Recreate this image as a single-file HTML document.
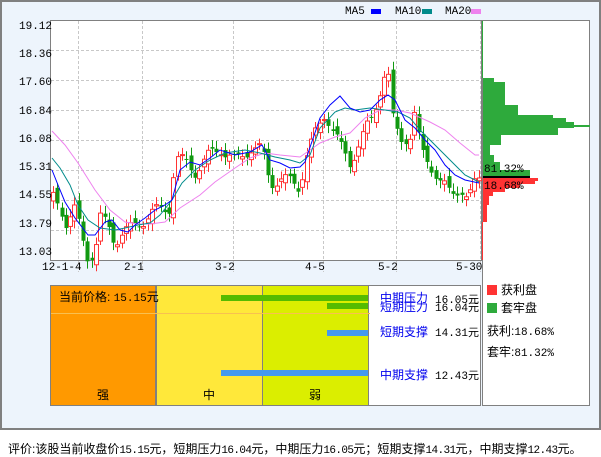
<!DOCTYPE html>
<html><head><meta charset="utf-8"><style>
*{margin:0;padding:0}
body{width:601px;height:456px;background:#fff;position:relative;overflow:hidden;font-family:"Liberation Mono","Noto Sans CJK SC",monospace}
.t{position:absolute;font-size:11px;color:#000;white-space:nowrap;line-height:12px}
.c{font-family:"Liberation Sans","Noto Sans CJK SC",sans-serif;font-size:12px}
.f span{font-family:'Liberation Mono';font-size:11px;letter-spacing:-0.6px}
</style></head><body>
<div style="position:absolute;left:0;top:0;width:597px;height:426px;border:2px solid #808080;border-right-width:3px;background:#edf4fc"></div>
<svg style="position:absolute;left:0;top:0" width="601" height="456">
<rect x="50.5" y="20.5" width="431" height="240" fill="#fff" stroke="#808080"/>
<rect x="482.5" y="20.5" width="107" height="385" fill="#fff" stroke="#808080"/>
<g stroke="#c8c8c8" stroke-dasharray="3,2">
<line x1="51" y1="50.5" x2="481" y2="50.5"/><line x1="51" y1="80.5" x2="481" y2="80.5"/><line x1="51" y1="110.5" x2="481" y2="110.5"/><line x1="51" y1="140.5" x2="481" y2="140.5"/><line x1="51" y1="170.5" x2="481" y2="170.5"/><line x1="51" y1="200.5" x2="481" y2="200.5"/><line x1="51" y1="230.5" x2="481" y2="230.5"/>
<line x1="78.5" y1="21" y2="272" x2="78.5"/><line x1="142.5" y1="21" y2="272" x2="142.5"/><line x1="233.5" y1="21" y2="272" x2="233.5"/><line x1="323.5" y1="21" y2="272" x2="323.5"/><line x1="396.5" y1="21" y2="272" x2="396.5"/><line x1="480.5" y1="21" y2="272" x2="480.5"/>
</g>
<g id="cd"></g>
<polyline fill="none" stroke="#ee82ee" points="52,131 65,145 78,163 95,190 110,210 125,222 138,224 150,224 165,222 180,208 200,195 215,182 235,168 250,158 265,153 280,155 300,157 310,150 320,143 335,137 350,133 365,118 380,110 395,110 410,113 430,122 445,130 460,143 475,155 479,155"/>
<polyline fill="none" stroke="#008b8b" points="52,158 60,168 70,185 78,205 88,220 100,228 115,230 125,228 138,225 150,223 160,215 172,200 182,183 195,170 210,160 225,153 245,150 260,153 275,157 290,160 300,163 310,155 320,128 335,112 345,108 355,110 370,108 385,110 398,112 410,118 420,130 430,140 440,150 455,165 465,175 475,180 479,182"/>
<polyline fill="none" stroke="#0000ff" points="52,170 58,185 65,202 75,218 88,235 95,235 105,222 112,220 120,230 128,232 135,225 145,218 155,210 165,205 172,200 180,170 190,162 200,165 210,158 220,150 235,155 250,152 262,145 270,160 280,163 290,168 300,167 305,162 320,118 330,105 340,96 350,108 360,112 370,110 380,100 388,95 395,100 405,120 415,128 425,140 435,150 445,165 455,175 465,180 479,183"/>
<line x1="482.5" y1="21" x2="482.5" y2="78" stroke="#2eaa3c"/>
<g fill="#2eaa3c">
<rect x="483" y="78" width="11" height="4"/><rect x="483" y="82" width="22" height="23"/><rect x="483" y="105" width="35" height="10"/><rect x="483" y="115" width="70" height="3"/><rect x="483" y="118" width="83" height="4"/><rect x="483" y="122" width="91" height="6"/><rect x="483" y="125" width="107" height="2"/><rect x="483" y="128" width="75" height="7"/><rect x="483" y="135" width="18" height="10"/><rect x="483" y="145" width="7" height="10"/><rect x="483" y="155" width="11" height="7"/><rect x="483" y="162" width="17" height="8"/><rect x="483" y="170" width="47" height="6"/>
</g>
<rect x="483" y="176" width="47" height="2" fill="#000"/>
<g fill="#ff3333">
<rect x="483" y="178" width="55" height="3"/><rect x="483" y="181" width="52" height="3"/><rect x="483" y="184" width="37" height="4"/><rect x="483" y="188" width="22" height="4"/><rect x="483" y="192" width="10" height="4"/><rect x="483" y="196" width="6" height="9"/><rect x="483" y="205" width="4" height="17"/><rect x="482" y="222" width="1" height="38"/>
</g>
<rect x="371" y="9" width="10" height="5" fill="#0000ff"/><rect x="422" y="9" width="10" height="5" fill="#008b8b"/><rect x="471" y="9" width="10" height="5" fill="#ee82ee"/>
<rect x="50.5" y="285.5" width="105" height="120" fill="#ff9900" stroke="#808080"/>
<rect x="156.5" y="285.5" width="106" height="120" fill="#ffe83a" stroke="#808080"/>
<rect x="262.5" y="285.5" width="106" height="120" fill="#dbee00" stroke="#808080"/>
<rect x="368.5" y="285.5" width="112" height="120" fill="#fff" stroke="#808080"/>
<line x1="51" y1="313.5" x2="370" y2="313.5" stroke="#f8c050"/>
<rect x="221" y="295" width="147" height="6" fill="#55bb00"/>
<rect x="327" y="303" width="41" height="6" fill="#55bb00"/>
<rect x="327" y="330" width="41" height="6" fill="#4499ee"/>
<rect x="221" y="370" width="147" height="6" fill="#4499ee"/>
<rect x="487" y="285" width="10" height="10" fill="#ff3333"/>
<rect x="487" y="303" width="10" height="10" fill="#2eaa3c"/>
</svg>
<div class="t" style="left:19px;top:21px">19.12</div>
<div class="t" style="left:19px;top:49px">18.36</div>
<div class="t" style="left:19px;top:77px">17.60</div>
<div class="t" style="left:19px;top:106px">16.84</div>
<div class="t" style="left:19px;top:134px">16.08</div>
<div class="t" style="left:19px;top:162px">15.31</div>
<div class="t" style="left:19px;top:190px">14.55</div>
<div class="t" style="left:19px;top:219px">13.79</div>
<div class="t" style="left:19px;top:247px">13.03</div>
<div class="t" style="left:42px;top:262px">12-1-4</div>
<div class="t" style="left:124px;top:262px">2-1</div>
<div class="t" style="left:215px;top:262px">3-2</div>
<div class="t" style="left:305px;top:262px">4-5</div>
<div class="t" style="left:378px;top:262px">5-2</div>
<div class="t" style="left:456px;top:262px">5-30</div>
<div class="t" style="left:345px;top:6px">MA5</div>
<div class="t" style="left:395px;top:6px">MA10</div>
<div class="t" style="left:445px;top:6px">MA20</div>
<div class="t" style="left:484px;top:164px">81.32%</div>
<div class="t" style="left:484px;top:181px">18.68%</div>
<div class="t c" style="left:59px;top:291px">当前价格: <span style="font-family:'Liberation Mono';font-size:11px">15.15</span>元</div>
<div class="t c" style="left:380px;top:292px;color:#0000ee">中期压力</div>
<div class="t c" style="left:380px;top:301px;color:#0000ee">短期压力</div>
<div class="t" style="left:435px;top:295px">16.05元</div>
<div class="t" style="left:435px;top:303px">16.04元</div>
<div class="t c" style="left:380px;top:326px;color:#0000ee">短期支撑</div>
<div class="t" style="left:435px;top:328px">14.31元</div>
<div class="t c" style="left:380px;top:369px;color:#0000ee">中期支撑</div>
<div class="t" style="left:435px;top:371px">12.43元</div>
<div class="t c" style="left:97px;top:389px">强</div>
<div class="t c" style="left:203px;top:389px">中</div>
<div class="t c" style="left:309px;top:389px">弱</div>
<div class="t c" style="left:501px;top:284px">获利盘</div>
<div class="t c" style="left:501px;top:302px">套牢盘</div>
<div class="t c" style="left:487px;top:325px">获利:<span style="font-family:'Liberation Mono';font-size:11px">18.68%</span></div>
<div class="t c" style="left:487px;top:346px">套牢:<span style="font-family:'Liberation Mono';font-size:11px">81.32%</span></div>
<div class="t c f" style="left:8px;top:443px;font-size:12px">评价:该股当前收盘价<span>15.15</span>元，短期压力<span>16.04</span>元，中期压力<span>16.05</span>元；短期支撑<span>14.31</span>元，中期支撑<span>12.43</span>元。</div>
<script>
var k=[[53,14.6],[60,14.4],[66,14.0],[75,14.3],[82,13.6],[88,13.1],[95,13.3],[100,14.1],[110,13.8],[115,13.5],[120,13.7],[130,13.8],[140,14.0],[150,14.2],[160,14.3],[170,14.4],[175,15.6],[185,15.5],[195,15.3],[210,15.7],[220,15.9],[235,15.5],[250,15.9],[262,15.8],[270,15.0],[280,15.1],[290,15.0],[300,14.9],[305,15.6],[315,16.2],[325,16.8],[330,16.5],[340,15.9],[350,15.5],[355,15.8],[365,16.3],[372,16.6],[380,17.4],[387,18.0],[393,16.5],[400,16.1],[410,16.2],[415,16.8],[420,15.8],[430,15.5],[440,15.0],[450,14.7],[460,14.9],[468,14.5],[475,15.0],[479,15.15]];
function P(x){for(var i=1;i<k.length;i++){if(x<=k[i][0]){var a=k[i-1],b=k[i];return a[1]+(b[1]-a[1])*(x-a[0])/(b[0]-a[0]);}}return 15.15;}
function Y(p){return 20+(19.12-p)*39.47;}
var s='',prev=P(53);
for(var x=53;x<=479;x+=4.3){var c=P(x)+0.18*Math.sin(x*1.7),o=prev+0.12*Math.sin(x*0.9);var hi=Math.max(o,c)+0.1+0.1*Math.abs(Math.sin(x*2.3)),lo=Math.min(o,c)-0.1-0.1*Math.abs(Math.cos(x*1.3));var up=c>=o,col=up?'#ff3333':'#119911';var xx=Math.round(x);
s+='<line x1="'+(xx+0.5)+'" x2="'+(xx+0.5)+'" y1="'+Y(hi)+'" y2="'+Y(lo)+'" stroke="'+col+'"/>';
var y1=Y(Math.max(o,c)),h=Math.max(1,Y(Math.min(o,c))-y1);
s+=up?'<rect x="'+(xx-1.5)+'" y="'+y1+'" width="4" height="'+h+'" fill="#fff" stroke="'+col+'"/>':'<rect x="'+(xx-1.5)+'" y="'+y1+'" width="4" height="'+h+'" fill="'+col+'"/>';prev=c;}
document.getElementById('cd').innerHTML=s;
</script>
</body></html>
